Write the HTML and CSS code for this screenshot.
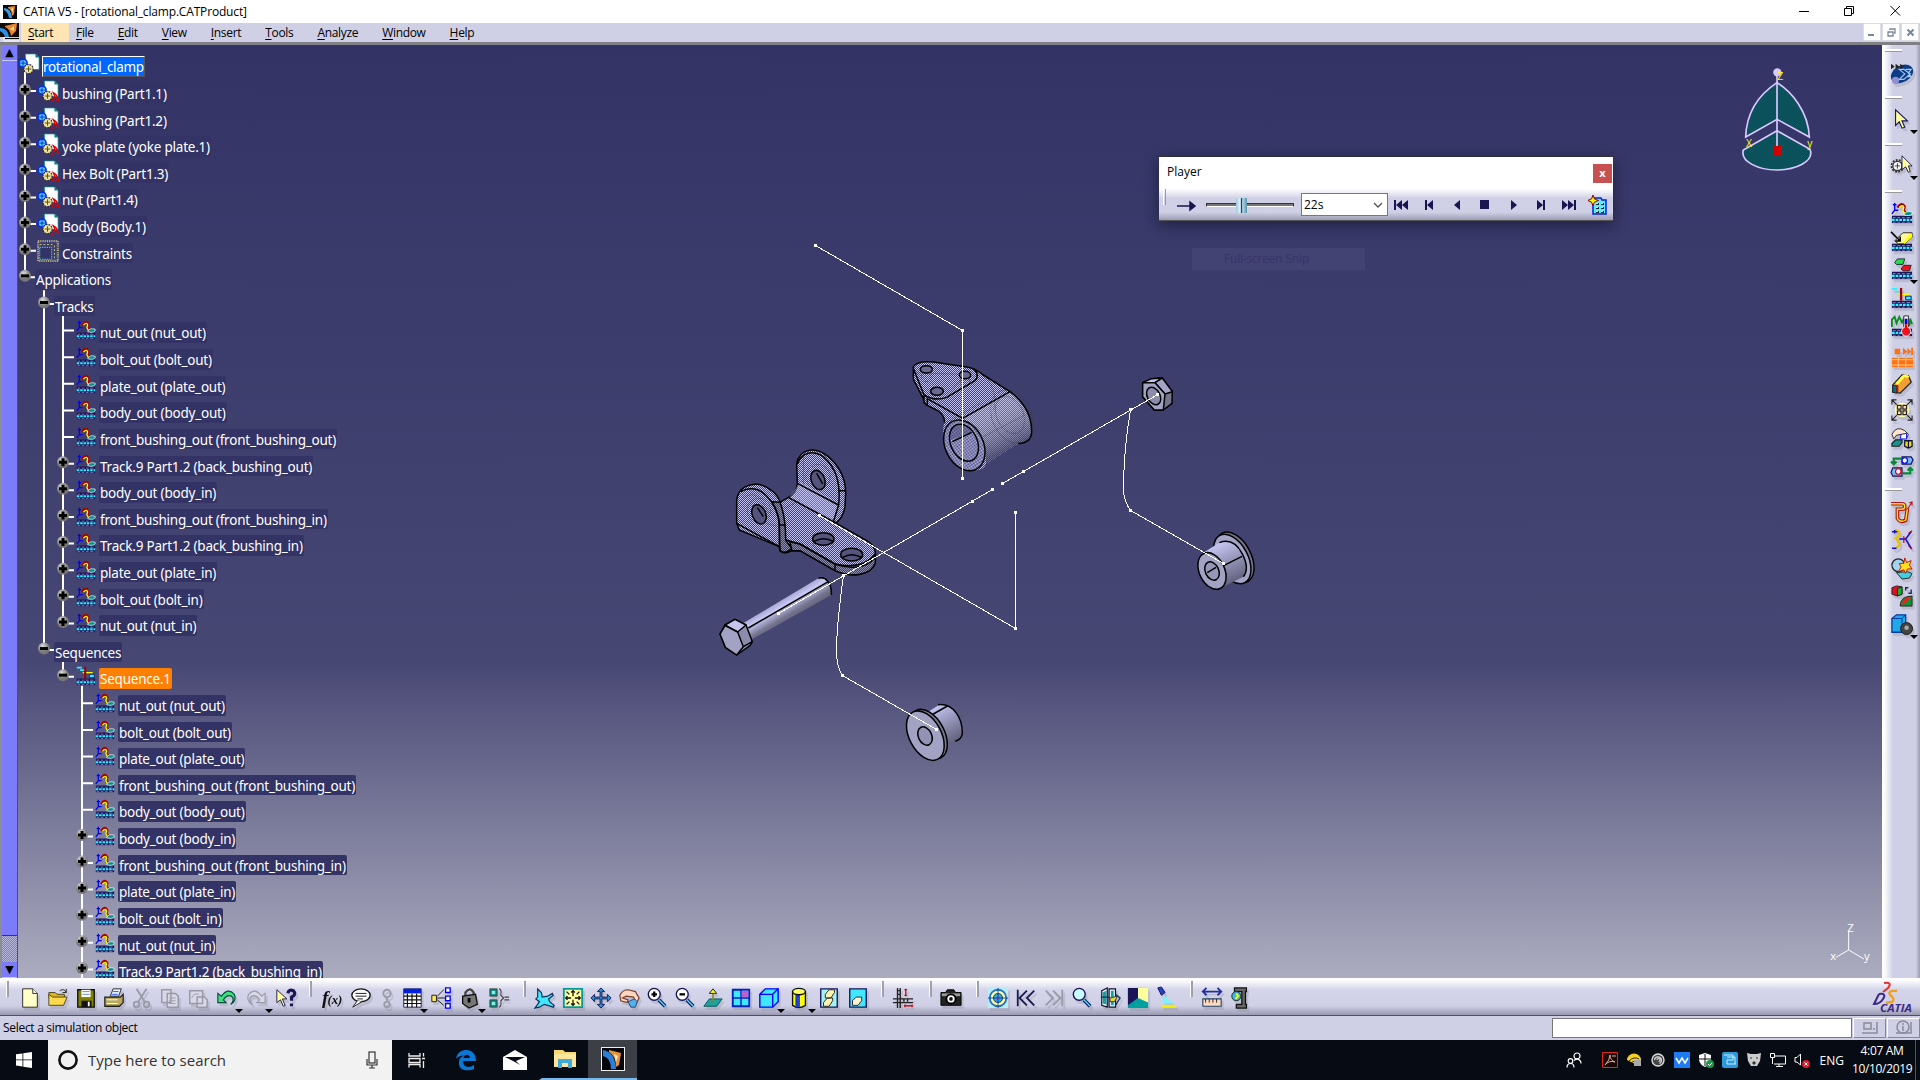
FILE: index.html
```html
<!DOCTYPE html>
<html lang="en">
<head>
<meta charset="utf-8">
<title>CATIA V5 - [rotational_clamp.CATProduct]</title>
<link rel="stylesheet" href="styles.css">
</head>
<body>
<div class="screen">
  <header class="titlebar">
    <svg class="app-icon" viewBox="0 0 14 14"><rect width="14" height="14" fill="#06070f"/><path d="M1 3Q8 3 9 13L6 13Q5 7 1 5Z" fill="#3a9be0"/><path d="M5 2L12 1L11 9L9 11Q9 5 5 3Z" fill="#f08a24"/><path d="M8 4l2-1-.5 4z" fill="#ffe9b0"/></svg>
    <span class="title-text">CATIA V5 - [rotational_clamp.CATProduct]</span>
    <svg class="win-controls" viewBox="0 0 134 20" fill="none" stroke="#000"><path d="M15 10.5h10M60.500 7.500h7v7h-7zM62.500 7V5.500h7v7h-2M106.500 5l9.500 9.500M116 5l-9.500 9.500"/></svg>
  </header>
  <nav class="menubar">
    <svg class="doc-icon" viewBox="0 0 19 19"><rect width="19" height="14" fill="#120a08"/><path d="M0 5Q8 5 9 14H5Q4 10 0 8Z" fill="#2f8fe0"/><path d="M5 3L17 0L16 8L11 13Q10 6 5 4Z" fill="#e8842a"/><path d="M10 6l4-3v5z" fill="#ffe0a0"/><path d="M5 15.500h14" stroke="#000"/><path d="M4 14v4h15" stroke="#fff" fill="none"/></svg>
    <span class="menu start"><u>S</u>tart</span><span class="menu"><u>F</u>ile</span><span class="menu"><u>E</u>dit</span><span class="menu"><u>V</u>iew</span><span class="menu"><u>I</u>nsert</span><span class="menu"><u>T</u>ools</span><span class="menu"><u>A</u>nalyze</span><span class="menu"><u>W</u>indow</span><span class="menu"><u>H</u>elp</span>
    <svg class="mdi" viewBox="0 0 57 19"><path d="M.5.500h17v17H.5zM19.500.500h17v17h-17zM38.500.500h17v17h-17z" fill="#fff" stroke="#dcdce4"/><g stroke="#75869a" stroke-width="2" fill="none"><path d="M5 12h6M44.500 6.500l6 6M50.500 6.500l-6 6"/><path d="M25 9h5v4h-5zM27 7V6h5v4h-1" stroke-width="1.300"/></g></svg>
  </nav>
  <main class="workspace">
    <aside class="scroll"><span class="scroll-btn">▲</span><span class="scroll-thumb"></span><span class="scroll-track"></span><span class="scroll-btn">▼</span></aside>
    <section class="viewport">
      <svg class="scene" viewBox="18 45 1864 933">
        <defs>
          <pattern id="dither" width="6" height="6" patternUnits="userSpaceOnUse"><rect width="6" height="6" fill="#404070"/><path d="M0 0h3v3H0zM3 3h3v3H3z" fill="#c4c4f4"/></pattern>
          <pattern id="ditherDark" width="6" height="6" patternUnits="userSpaceOnUse"><rect width="6" height="6" fill="#404070"/><path d="M0 0h3v3H0zM3 3h3v3H3z" fill="#8c8cae"/></pattern>
          <pattern id="ditherTeal" width="6" height="6" patternUnits="userSpaceOnUse"><rect width="6" height="6" fill="#2a3a62"/><path d="M0 0h3v3H0zM3 3h3v3H3z" fill="#0f5560"/></pattern>
          <linearGradient id="shaft" gradientUnits="userSpaceOnUse" x1="240" y1="780" x2="275" y2="838"><stop offset="0" stop-color="#a4a4d0"/><stop offset=".3" stop-color="#c8c8f6"/><stop offset=".75" stop-color="#74748e"/><stop offset="1" stop-color="#64647a"/></linearGradient>
          <linearGradient id="barrel" gradientUnits="userSpaceOnUse" x1="860" y1="150" x2="940" y2="320"><stop offset="0" stop-color="#fff" stop-opacity=".08"/><stop offset="1" stop-color="#444466" stop-opacity=".75"/></linearGradient>
          <linearGradient id="bushA" gradientUnits="userSpaceOnUse" x1="1080" y1="190" x2="1130" y2="300"><stop offset="0" stop-color="#c4c4f2"/><stop offset="1" stop-color="#646480"/></linearGradient>
          <linearGradient id="bushB" gradientUnits="userSpaceOnUse" x1="225" y1="680" x2="285" y2="780"><stop offset="0" stop-color="#c4c4f2"/><stop offset="1" stop-color="#646480"/></linearGradient>
        </defs>
        <g class="part" transform="translate(700 340) scale(.33333)">
          <path d="M640 80C652 62 680 64 700 66L805 82C825 86 838 96 850 105L930 155C975 188 995 230 995 275C995 300 975 312 955 310L858 372C852 387 840 392 820 390C778 385 742 345 733 305Q726 270 733 248Q735 228 715 213L676 193L668 170L640 118Z" fill="url(#dither)" stroke="none"/>
          <path d="M790 235L930 155C975 188 995 230 995 275C995 300 975 312 955 310L858 372C860 320 840 260 790 235Z" fill="url(#barrel)" stroke="none"/>
          <g class="ghost"><ellipse cx="935" cy="230" rx="58" ry="84" transform="rotate(-25 935 230)"/><ellipse cx="930" cy="225" rx="40" ry="58" transform="rotate(-25 930 225)"/><path d="M735 250L840 190M850 290L975 225M860 115Q895 160 880 210M650 98L800 104L740 160"/><circle cx="679" cy="110" r="15"/><circle cx="795" cy="125" r="15"/></g>
          <path d="M640 118V80C652 62 680 64 700 66L805 82C825 86 838 96 850 105L930 155C975 188 995 230 995 275C995 300 975 312 955 310M640 85L672 165Q705 185 740 172L825 122Q840 108 822 86M640 118L668 172L676 193L715 213Q735 228 733 248M680 175L788 235L930 155M672 165v25M682 176v22"/>
          <ellipse cx="793" cy="316" rx="57" ry="80" transform="rotate(-26 793 316)" fill="url(#dither)"/>
          <ellipse cx="792" cy="308" rx="40" ry="58" transform="rotate(-24 792 308)" fill="url(#dither)"/>
          <path d="M752 300Q750 258 778 254Q800 256 815 277Z" fill="#404070" opacity=".45" stroke="none"/>
          <path d="M757 305L815 277"/>
          <g fill="#686894"><ellipse cx="679" cy="88" rx="18" ry="11"/><ellipse cx="795" cy="105" rx="17" ry="11"/><ellipse cx="711" cy="154" rx="19" ry="12"/></g>
          <path d="M292 430L290 372C298 325 345 318 385 350C422 382 437 420 437 460L435 500Q430 530 410 548L400 545L505 605Q526 620 526 640V668C515 706 455 714 405 692L300 632H275Q255 645 240 632L238 620L118 570L110 550V480C115 440 150 430 175 433C210 440 235 465 240 487L265 472Q290 460 292 430Z" fill="url(#dither)"/>
          <path d="M405 672L405 692C455 714 515 706 526 668V642C520 680 460 692 405 672ZM270 605L300 612L405 672V692L300 632H275ZM240 487Q257 530 257 600L275 625Q255 645 240 632L238 560Q238 520 215 485Z" fill="url(#ditherDark)"/>
          <path d="M302 425L415 490L400 540L268 470Z" fill="#c8c8f6" opacity=".35" stroke="none"/>
          <g class="ghost"><path d="M130 475Q175 440 205 520M125 500L165 540L235 560M310 350V440L420 500M255 505L300 480M380 545L490 620"/><circle cx="177" cy="510" r="35"/><circle cx="354" cy="410" r="36"/><ellipse cx="370" cy="612" rx="30" ry="20"/></g>
          <path d="M110 550L238 620V560C238 520 215 470 175 450Q145 440 122 455M292 372C305 335 340 330 370 350C410 385 422 430 416 495M292 430L416 495L400 545M418 452h18M240 555h17M265 472L400 545M257 600L300 612L405 672Q490 690 526 642M238 620L242 634"/>
          <g fill="#54547e"><ellipse cx="177" cy="523" rx="20" ry="30" transform="rotate(-22 177 523)"/><ellipse cx="354" cy="420" rx="20" ry="30" transform="rotate(-22 354 420)"/><ellipse cx="370" cy="597" rx="32" ry="19"/><ellipse cx="455" cy="644" rx="33" ry="19"/></g>
          <path d="M172 503L190 530M350 400L368 432M342 604Q370 588 400 604M428 652Q455 636 484 652"/>
          <path d="M125 852L355 715C378 708 396 730 394 765L152 900Z" fill="url(#shaft)" stroke="none"/>
          <path d="M145 864L385 725M355 715C378 708 396 730 394 765"/>
          <path d="M60 882L75 855L105 838L138 855L157 905L150 917L110 945L76 922Z" fill="#8c8cae"/><path d="M75 855L105 838L138 855L113 876Z" fill="#c4c4ee"/><path d="M60 882L75 857L113 876L130 920L110 945L76 922Z" fill="#a2a2c4"/><path d="M130 920L157 905"/>
        </g>
        <g class="part" transform="translate(860 480) scale(.33333)">
          <ellipse cx="1125" cy="232" rx="48" ry="82" transform="rotate(-28 1125 232)" fill="#74748c"/><ellipse cx="1117" cy="237" rx="47" ry="80" transform="rotate(-28 1117 237)" fill="#a4a4c8"/>
          <path d="M1028 220L1080 187Q1120 172 1145 220Q1170 265 1150 290L1090 320Z" fill="url(#bushA)" stroke="none"/><path d="M1078 188Q1120 172 1146 220Q1170 265 1150 290M1085 260L1146 229"/>
          <ellipse cx="1056" cy="273" rx="38" ry="58" transform="rotate(-25 1056 273)" fill="#a2a2c4"/><ellipse cx="1056" cy="273" rx="20" ry="29" transform="rotate(-25 1056 273)" fill="#9696b8"/><path d="M1042 278L1068 262"/>
          <path d="M200 698L240 673C280 672 308 715 307 760Q306 777 288 784L255 800Z" fill="url(#bushB)" stroke="none"/><path d="M234 674C280 668 308 715 307 760Q306 777 286 784M215 705L262 678"/>
          <ellipse cx="206" cy="762" rx="47" ry="80" transform="rotate(-28 206 762)" fill="#77778f"/><ellipse cx="196" cy="767" rx="48" ry="80" transform="rotate(-28 196 767)" fill="#a2a2c4"/><ellipse cx="195" cy="768" rx="20" ry="29" transform="rotate(-25 195 768)" fill="#9292b4"/>
        </g>
        <g class="part" transform="translate(1100 360) scale(.33333)"><path d="M128 68L155 56L187 54L217 95L216 130L190 150H163L128 110Z" fill="#74748c"/><path d="M128 68L155 56L187 54L165 68Z" fill="#c4c4ee"/><path d="M165 68L187 54L217 95L195 102Z" fill="#a4a4c8"/><path d="M128 68L165 68L195 102L190 150H163L128 110Z" fill="#a2a2c4"/><ellipse cx="161" cy="108" rx="19" ry="28" transform="rotate(-28 161 108)" fill="#8c8cac"/></g>
        <g class="track">
          <path d="M815.500 245.500L962.500 330.500V478.500M778.500 613.500L992.500 489.500M1002.500 483.500L1157 395M819.500 515.500L1015.500 628.500V512.500M843.500 575.500Q836.500 625 836.500 652Q837 668 842.500 675.500L936.500 729.500M1130.500 410Q1123.500 450 1123.500 492Q1125 503 1130.500 510.500L1223.500 563.500"/>
          <path class="dots" d="M814 244h3v3h-3zM961 329h3v3h-3zM961 477h3v3h-3zM777 612h3v3h-3zM991 488h3v3h-3zM971 500h3v3h-3zM1001 482h3v3h-3zM1022 470h3v3h-3zM1156 393h3v3h-3zM818 514h3v3h-3zM1014 627h3v3h-3zM1014 511h3v3h-3zM842 574h3v3h-3zM841 674h3v3h-3zM935 728h3v3h-3zM1129 408h3v3h-3zM1129 509h3v3h-3zM1222 562h3v3h-3z"/>
        </g>
        <g class="compass" transform="translate(1720 0) scale(.33333)">
          <path d="M171 248C130 275 80 325 77 411L171 358L268 411C265 335 215 275 171 248ZM171 392L270 448C285 485 225 510 171 510C115 510 60 485 70 450Z" fill="url(#ditherTeal)"/><path d="M171 220V440"/><circle cx="172" cy="217" r="10" fill="#dcc8ff"/><path d="M160 438h26v27h-26z" fill="#d00000" stroke="none"/><text x="172" y="240">Z</text><text x="78" y="442">X</text><text x="262" y="442">y</text>
        </g>
        <g class="triad" transform="translate(1500 900) scale(.33333)"><path d="M1046 95V150L1008 172M1046 150L1092 177"/><text x="1042" y="96">Z</text><text x="991" y="180">x</text><text x="1092" y="181">y</text></g>
      </svg>
      <div class="tree" id="tree"></div>
      <div class="snip">Full-screen Snip</div>
      <div class="player">
        <div class="player-title"><span>Player</span><b>x</b></div>
        <div class="player-bar">
          <i class="grip"></i>
          <svg class="parrow" viewBox="0 0 20 12"><path d="M0 6h17M13 2l5 4-5 4z" stroke="#1c1450" stroke-width="1.500" fill="#1c1450"/></svg>
          <div class="slider"><i></i></div>
          <div class="combo"><span>22s</span><svg viewBox="0 0 10 6" width="10" height="6"><path d="M1 1l4 4 4-4" fill="none" stroke="#555" stroke-width="1.300"/></svg></div>
          <div class="pbuttons" id="pbuttons"></div>
        </div>
      </div>
    </section>
    <aside class="rightbar" id="rightbar"></aside>
  </main>
  <div class="bottombar"><div class="tools" id="tools"></div>
    <svg class="ds" viewBox="0 0 42 32" fill="none"><path d="M13 2Q22 1 17 7L12 11" stroke="#e03030" stroke-width="2"/><path d="M8 13Q16 12 12 18Q9 23 3 23L8 13" stroke="#3c2a88" stroke-width="2"/><path d="M26 10Q16 9 19 14Q25 18 21 21L15 22" stroke="#f0a020" stroke-width="2.300"/><text x="9" y="30.500" textLength="32" lengthAdjust="spacingAndGlyphs">CATIA</text></svg>
  </div>
  <div class="statusbar"><span>Select a simulation object</span><div class="power"></div>
    <div class="sbtn"><svg viewBox="0 0 20 16"><path d="M4 3h7v6H4zM13 9h2M17 2v11H2" /></svg></div><div class="sbtn"><svg viewBox="0 0 20 16"><circle cx="9" cy="7" r="6"/><path d="M9 6v5M8 4h2M17 2v11H2"/></svg></div>
  </div>
  <footer class="taskbar">
    <div class="winstart"><svg viewBox="0 0 16 16" width="16" height="16"><path d="M0 2.300l6.500-.9v6.100H0zM7.300 1.300L16 0v7.500H7.300zM0 8.300h6.500v6.200L0 13.600zM7.300 8.300H16V16l-8.700-1.300z" fill="#fff"/></svg></div>
    <div class="search"><svg width="20" height="20" viewBox="0 0 20 20"><circle cx="10" cy="10" r="8.600" fill="none" stroke="#111" stroke-width="2.600"/></svg><span>Type here to search</span><svg class="mic" width="14" height="18" viewBox="0 0 14 18" fill="none" stroke="#333" stroke-width="1.200"><rect x="4" y="1" width="6" height="11"/><path d="M2 8v6h10V8M7 14v3M4 17h6"/></svg></div>
    <div class="task"><svg width="18" height="16" viewBox="0 0 18 16" fill="none" stroke="#eee" stroke-width="1.300"><path d="M1 1v3h11V1M1 6.500h11v4H1zM1 15.500v-3h11v3M15.500 1v3.500M15.500 9v7M14 6.500h3"/></svg></div>
    <div class="task"><svg width="22" height="22" viewBox="0 0 22 22"><path d="M1 10C2 3 7 1 11.500 1 17 1 21 5 21 12H8C8 19 15 19 19 16V20C12 23 3 21 4 13 4.500 9 7 7 10 6.500 5 6.500 2.500 8 1 10ZM8.500 9H15C15 4.500 9 4.500 8.500 9Z" fill="#0a78d7"/></svg></div>
    <div class="task"><svg width="24" height="20" viewBox="0 0 24 20"><path d="M0 7L12 0l12 7v13H0z" fill="#fff"/><path d="M2 7h20l-9 4 4 4-5-3z" fill="#070c14"/></svg></div>
    <div class="task run"><svg width="22" height="20" viewBox="0 0 22 20"><path d="M0 1h9l2 2h11v15H0z" fill="#f8d775"/><path d="M0 5h22v13H0z" fill="#fde69b"/><path d="M4 19v-9h14v9h-4v-5H8v5z" fill="#3fa9e0"/></svg></div>
    <div class="task active"><svg width="24" height="24" viewBox="0 0 24 24"><rect x=".5" y=".5" width="23" height="23" fill="#05060c" stroke="#eee"/><path d="M2 3Q14 5 15 22L10 22Q10 11 2 9Z" fill="#2a80d8"/><path d="M8 3l12 3-2 12-3 2Q15 9 8 5z" fill="#e8903c"/><path d="M13 7l4 2-2 6z" fill="#ffe6b0"/></svg></div>
    <div class="tray">
      <svg viewBox="0 0 16 16" fill="none" stroke="#fff" stroke-width="1.200"><circle cx="11" cy="4" r="3"/><circle cx="4.500" cy="9" r="2.300"/><path d="M1 15.500q0-4 3.500-4t3.500 4M8 8.500q3-3 6 0 1 1 1 3"/></svg>
      <svg class="first" viewBox="0 0 16 16"><path d="M.5.500h15v15H.5z" fill="#1c0808" stroke="#e02818"/><path d="M3 13Q8 8 8 3Q8 8 13 10Q7 8 3 13M10 4h4" fill="none" stroke="#d8b0a0"/></svg>
      <svg viewBox="0 0 16 16"><path d="M1 8a7 6.500 0 0 1 14 0L9 12z" fill="#f4d020"/><path d="M3 9q5-5 10-2M5 11q3-3 7-2" stroke="#332a00" fill="none"/><path d="M8 8h7v6H8z" fill="#aaa"/></svg>
      <svg viewBox="0 0 16 16" fill="none" stroke="#ddd" stroke-width="1.400"><circle cx="8" cy="8" r="6" fill="#444"/><path d="M4.500 8a3.500 3.500 0 1 1 5 3.500M7 8a1.500 1.500 0 1 1 1.500 1.500" stroke-width="1.200"/></svg>
      <svg viewBox="0 0 16 16"><path d="M0 0h16v16H0z" fill="#1e7cf0"/><path d="M2 6l3 5 3-5 3 5 3-5" fill="none" stroke="#fff" stroke-width="1.500"/></svg>
      <svg viewBox="0 0 16 16"><path d="M7 1l6 2v5q-1 5-6 7-5-2-6-7V3z" fill="#fff"/><path d="M7 2v12M1 7h12" stroke="#111"/><circle cx="12" cy="12" r="4" fill="#1a9a4a"/><path d="M10 12l1.500 1.500L14 11" stroke="#fff" fill="none"/></svg>
      <svg viewBox="0 0 16 16"><rect width="16" height="16" rx="2" fill="#2d9ade"/><path d="M2 3h9v5H5v4h9M5 5h8v7" fill="none" stroke="#c8ecff"/></svg>
      <svg viewBox="0 0 16 16"><path d="M1 1l4 1h6l4-1-1 8-3 5H5L2 9z" fill="#ccc"/><path d="M4 6h2M10 6h2M7 10h2v2H7z" stroke="#333" fill="#333"/></svg>
      <svg viewBox="0 0 16 16" fill="none" stroke="#fff"><path d="M4 4h11.500v8H4M.5 1.500h4v4h-4zM9 12v3M6 14.500h7M2.500 6v6"/></svg>
      <svg viewBox="0 0 16 16"><path d="M1 5.500h2L6.500 2v11L3 10H1z" fill="none" stroke="#fff"/><circle cx="12" cy="12" r="4" fill="#d8202c"/><path d="M10.500 10.500l3 3m0-3l-3 3" stroke="#fff"/></svg>
      <span class="lang">ENG</span><span class="clock">4:07 AM<br>10/10/2019</span><i class="peek"></i>
    </div>
  </footer>
</div>
<script src="script.js"></script>
</body>
</html>
```
FILE: styles.css
```css
* { box-sizing: border-box; }
body { margin: 0; font-family: "Open Sans", "Noto Sans", sans-serif; font-size: 12px; color: #000; overflow: hidden; }
.screen { width: 1920px; height: 1080px; display: flex; flex-direction: column; background: #cfcfe6; }
svg { display: block; flex: none; }
.titlebar { height: 23px; background: #fff; display: flex; align-items: center; padding-left: 3px; }
.app-icon { width: 14px; height: 14px; }
.title-text { margin-left: 6px; letter-spacing: -.17px; padding-bottom: 1px; }
.win-controls { width: 134px; height: 20px; margin-left: auto; margin-right: 2px; margin-top: -1px; }
.menubar { height: 19px; display: flex; align-items: center; background: #cfcfe6; }
.doc-icon { width: 19px; height: 19px; margin-right: 2px; }
.menu { padding: 0 12px; line-height: 19px; letter-spacing: -.32px; }
.menu u { text-underline-offset: 2px; }
.menu.start { width: 48px; background: #ffe4b4; padding: 0 0 0 7px; margin-right: -5px; }
.mdi { width: 57px; height: 19px; margin-left: auto; }
.workspace { height: 936px; display: flex; border-top: 3px solid #7f7f86; }
.scroll { width: 18px; border-left: 2px solid #8c8c94; background: #7b7bfc; display: flex; flex-direction: column; border-right: 1px solid #4a4a90; }
.scroll-btn { height: 16px; font: 11px/16px "DejaVu Sans", sans-serif; text-align: center; border-bottom: 1px solid #c8c8ff; }
.scroll-thumb { flex: 1; border-bottom: 1px solid #333380; }
.scroll-track { height: 26px; background: repeating-conic-gradient(#7b7bfc 0 25%, #b4b4d8 0 50%) 0 0 / 2px 2px; }
.viewport { width: 1864px; position: relative; overflow: hidden; background: linear-gradient(#333366, #474774 66%, #acacc0); }
.scene { position: absolute; left: 0; top: 0; width: 1864px; height: 933px; }
.part { fill: none; stroke: #000; stroke-width: 4.500; stroke-linejoin: round; }
.ghost { stroke: #33334c; stroke-width: 2; stroke-dasharray: 3 3; fill: none; }
.track { fill: none; stroke: #fff; stroke-width: 1; shape-rendering: crispEdges; }
.track .dots { fill: #fff; stroke: none; }
.compass { stroke: #dcc8ff; stroke-width: 5; }
.compass text { fill: #ffff00; stroke: none; font-size: 31px; }
.triad { fill: none; stroke: #fff; stroke-width: 3; }
.triad text { fill: #fff; stroke: none; font-size: 34px; }
.tree { position: relative; padding-top: 8.400px; }
.tree-lines { position: absolute; left: 0; top: 0; }
.row { height: 26.620px; display: flex; align-items: flex-start; position: relative; }
.row svg { width: 22px; height: 22px; }
.row .sim { width: 20px; height: 20px; margin: 1px 1px 0 0; }
.label { margin-top: 3px; height: 20.500px; line-height: 22.500px; padding: 0 1px; margin-left: 2px; border-radius: 2px; background: #333366; color: #fff; font-size: 13.500px; letter-spacing: -.22px; white-space: nowrap; font-family: "Noto Sans", sans-serif; }
.label.root { background: #0068ff; border: 1px solid #fff; border-right-color: #555; border-bottom-color: #555; border-radius: 0; line-height: 21px; padding: 0; letter-spacing: -.35px; }
.label.on { background: #ff8000; }
.snip { position: absolute; left: 1174px; top: 203px; width: 173px; height: 22px; line-height: 22px; padding-left: 32px; background: #424273; color: #35356a; letter-spacing: -.2px; }
.player { position: absolute; left: 1141px; top: 111px; width: 454px; height: 65px; display: flex; flex-direction: column; background: #fff; border-top: 1px solid #333; border-bottom: 1px solid #555; box-shadow: 0 4px 14px rgba(0,0,20,.45); }
.player-title { height: 32px; display: flex; justify-content: space-between; padding: 7px 1px 0 8px; line-height: 16px; }
.player-title b { width: 19px; height: 19px; background: #c75050; color: #fff; text-align: center; font-size: 11px; line-height: 17px; }
.player-bar { flex: 1; display: flex; align-items: center; background: linear-gradient(#fff, #d0d0e6 30%, #cfcfe6 75%, #9c9cb4); }
.grip { width: 3px; height: 16px; margin: -16px 12px 0 4px; border-left: 1px solid #fff; border-right: 1px solid #999; }
.parrow { width: 20px; height: 12px; margin: 3px 9px 0 -1px; }
.slider { width: 88px; height: 4px; border: 1px solid #333; border-bottom-color: #fff; background: #777; position: relative; }
.slider i { position: absolute; left: 29px; top: -6px; width: 11px; height: 15px; background: linear-gradient(90deg, #9cc8dc, #e8f6ff 40%, #246 45% 55%, #b8dcec 60%, #5890ac); }
.combo { width: 87px; height: 23px; margin-left: 7px; background: #fff; border: 1px solid #777; display: flex; align-items: center; justify-content: space-between; padding: 0 4px 0 2px; }
.pbuttons { display: flex; }
.pbuttons svg { width: 20px; height: 20px; margin-right: 8px; }
.pbuttons svg:first-child { margin-left: 3px; }
.pbuttons svg:last-child { margin-left: 1px; margin-right: 0; }
.rightbar { flex: 1; display: flex; flex-direction: column; align-items: center; border-left: 2px solid #fff; background: linear-gradient(90deg, #fff, #cfcfe6 25%, #cfcfe6 88%, #9c9cb4); }
.rightbar .tool { width: 34px; }
.hsep { width: 17px; height: 3px; margin-right: 17px; border-top: 2px solid #fff; border-bottom: 1px solid #999; }
.bottombar { height: 38px; display: flex; align-items: center; border-bottom: 1px solid #505060; background: linear-gradient(#fff 5%, #d4d4ea 32%, #cfcfe6 75%, #9a9ab2); }
.tools { display: flex; align-items: center; height: 37px; padding-top: 2px; }
.tool { display: flex; align-items: center; justify-content: center; position: relative; width: 28px; height: 28px; flex: none; }
.tool svg { width: 22px; height: 22px; overflow: visible; filter: drop-shadow(2px 3px 0 rgba(120,120,130,.22)); }
.tool.drop::after { content: ""; position: absolute; right: -2px; bottom: -1px; border: 4px solid transparent; border-top-color: #000; border-bottom: 0; }
.rightbar .tool.drop::after { right: 1px; bottom: -1px; }
.vsep { width: 3px; height: 16px; border-left: 1px solid #fff; border-right: 2px solid #a0a0ac; margin-top: -18px; }
.ds { width: 42px; height: 32px; margin: 0 7px 0 auto; }
.ds text { font: italic bold 10px "Open Sans", sans-serif; fill: #3c2a88; }
.statusbar { height: 24px; display: flex; align-items: center; padding-left: 3px; padding-bottom: 1px; letter-spacing: -.3px; }
.power { width: 300px; height: 20px; background: #fff; border: 1px solid #777; margin-left: auto; }
.sbtn { width: 33px; height: 20px; margin-left: 1px; border: 1px solid; border-color: #fff #888 #888 #fff; display: flex; align-items: center; justify-content: center; }
.sbtn svg { width: 20px; height: 16px; fill: none; stroke: #8a8a98; stroke-width: 1.500; }
.taskbar { height: 40px; background: #070c14; display: flex; color: #fff; }
.winstart { width: 48px; display: flex; align-items: center; justify-content: center; }
.search { width: 344px; background: #f2f2f2; color: #333; display: flex; align-items: center; padding: 0 13px 0 10px; font-size: 15px; gap: 10px; }
.mic { margin-left: auto; }
.task { width: 49px; display: flex; align-items: center; justify-content: center; }
.task.run { border-bottom: 2px solid #76b9ed; border-left: 3px solid transparent; }
.task.active { background: #3c4046; border-bottom: 2px solid #76b9ed; }
.tray { margin-left: auto; display: flex; align-items: center; gap: 8px; }
.tray svg { width: 16px; height: 16px; }
.tray .first { margin-left: 12px; }
.lang { margin-left: 2px; }
.clock { width: 60px; text-align: center; line-height: 18px; letter-spacing: -.35px; margin-right: 2px; }
.peek { width: 5px; height: 40px; border-left: 1px solid #555; margin-left: -7px; }
```
FILE: script.js
```js
const svg = (body, cls = "", box = 24) => `<svg class="${cls}" viewBox="0 0 ${box} ${box}" fill="none">${body}</svg>`;
const film = '<path d="M1 15h22v8H1z" fill="#1a1458"/><path d="M2 17h3M7 17h3M12 17h3M17 17h4M2 22h3M7 22h3M12 22h3M17 22h4" stroke="#88c"/><path d="M1 19.500h22" stroke="#2ef0ff" stroke-width="2.500" stroke-dasharray="3 1"/>';
const track = film + '<path d="M4 1v8l-3 4M4 9h4M2 3h4" stroke="#0000f0" stroke-width="1.500"/><path d="M7 6q5-7 8-1l-1 4 3 4" stroke="#a00" stroke-width="2.500"/><path d="M9 6q4-4 5 0l-1 3 2 4" stroke="#ff0" stroke-width="1.500"/><path d="M14 14q2-5 9-3v2q-3 3-9 1z" fill="#089090" stroke="#fff" stroke-width=".8"/>';
const sequence = film + '<path d="M1 2h6M5 5h6" stroke="#2ef0ff" stroke-width="2"/><path d="M8 8h12" stroke="#ff0" stroke-width="1.500"/><path d="M11 1v14" stroke="#a00000" stroke-width="2.500"/><path d="M16 10h6v4h-6z" fill="#2ef0ff" stroke="#1a1458"/>';
const gears = '<circle cx="5.500" cy="11" r="5.300" fill="#0030e8"/><circle cx="5.500" cy="11" r="3.500" fill="#58c8ff"/><path d="M5.500 8v6M2.500 11h6" stroke="#0030c0"/><circle cx="11.500" cy="17.500" r="5" fill="#f0e498" stroke="#2a2850" stroke-width="1.300" stroke-dasharray="2 1"/><path d="M11.500 14.500v6M8.500 17.500h6" stroke="#504820"/>';
const product = '<path d="M8 1h11l4 4v13H9z" fill="#fff" stroke="#009090" stroke-width=".8"/><path d="M19 1l4 4h-4z" fill="#008080"/>' + gears;
const part = product + '<path d="M17 21q4-2 1-7 4 2 5 7M15 23h3M21 22h3" stroke="#e00000" stroke-width="1.700"/>';
const constraints = '<path d="M1 1h22v22H1z" stroke="#b8b890" stroke-dasharray="1 1" stroke-width="3"/><path d="M3 8h13v13H3z" fill="#333366" stroke="#2ef0ff" stroke-dasharray="1.500 1"/><path d="M3 5h14M19 6v15" stroke="#e0d890" stroke-dasharray="2 2"/>';

const rows = [
  [0, "rotational_clamp", product, "r"],
  ...["bushing (Part1.1)", "bushing (Part1.2)", "yoke plate (yoke plate.1)", "Hex Bolt (Part1.3)", "nut (Part1.4)", "Body (Body.1)"].map(t => [1, t, part, "+"]),
  [1, "Constraints", constraints, "+"], [1, "Applications", "", "-"], [2, "Tracks", "", "-"],
  ...["nut_out (nut_out)", "bolt_out (bolt_out)", "plate_out (plate_out)", "body_out (body_out)", "front_bushing_out (front_bushing_out)"].map(t => [3, t, track, ""]),
  ...["Track.9 Part1.2 (back_bushing_out)", "body_out (body_in)", "front_bushing_out (front_bushing_in)", "Track.9 Part1.2 (back_bushing_in)", "plate_out (plate_in)", "bolt_out (bolt_in)", "nut_out (nut_in)"].map(t => [3, t, track, "+"]),
  [2, "Sequences", "", "-"], [3, "Sequence.1", sequence, "-"],
  ...["nut_out (nut_out)", "bolt_out (bolt_out)", "plate_out (plate_out)", "front_bushing_out (front_bushing_out)", "body_out (body_out)"].map(t => [4, t, track, ""]),
  ...["body_out (body_in)", "front_bushing_out (front_bushing_in)", "plate_out (plate_in)", "bolt_out (bolt_in)", "nut_out (nut_in)", "Track.9 Part1.2 (back_bushing_in)"].map(t => [4, t, track, "+"])
];
const pitch = 26.62, top0 = 8.4;
const lineX = [0, 7, 26, 45, 64];
const at = i => top0 + i * pitch;
let lines = "", balls = "", html = "";
lines += `M7 ${at(0) + 18}V${at(8) + 9}M26 ${at(8) + 24}V${at(22) + 9}M45 ${at(9) + 23}V${at(21) + 9}M45 ${at(22) + 20}V${at(23) + 9}M64 ${at(23) + 20}V940`;
rows.forEach(([level, text, icon, mark], i) => {
  const sim = level > 2, y = at(i);
  const pad = level === 0 ? 0 : icon ? (sim ? lineX[level] + 13 : 19) : lineX[level] + 8;
  html += `<div class="row" style="padding-left:${pad}px">${icon ? svg(icon, sim ? "sim" : "") : ""}<span class="label${mark === "r" ? " root" : ""}${text === "Sequence.1" ? " on" : ""}">${text}</span></div>`;
  if (level) lines += `M${lineX[level]} ${y + 11}h11`;
  if (mark === "+" || mark === "-") {
    const x = lineX[level], cy = y + 9.5;
    balls += `<circle cx="${x}" cy="${cy}" r="6" fill="url(#ball)"/><path d="M${x - 4} ${cy}h8${mark === "+" ? `M${x} ${cy - 4}v8` : ""}" stroke="#000" stroke-width="3"/>`;
  }
});
document.getElementById("tree").innerHTML = `<svg class="tree-lines" width="300" height="940" fill="none"><defs><radialGradient id="ball" cx=".4" cy=".3"><stop offset="0" stop-color="#ddd"/><stop offset="1" stop-color="#777"/></radialGradient></defs><path d="${lines}" stroke="#fff" stroke-width="2"/>${balls}</svg>` + html;

const N = "#1a1458", C = "#40e8ff";
const p = (d, f = "none", s = "none", w = 1) => `<path d="${d}" fill="${f}" stroke="${s}" stroke-width="${w}"/>`;
const glass = (m, f = "#fff") => p("M14 14l7 7", "none", N, 4) + p("M14 14l7 7", "none", C, 1.5) + `<circle cx="9" cy="8" r="6.500" fill="${f}" stroke="${N}" stroke-width="1.500"/>` + p(m, "none", "#000", 2.5);
const cursor = p("M5 2v17l4-4 3 7 3-1-3-7h6z", "#ffffa0", N, 1.2);
const I = {
  neu: p("M4 2h11l5 5v15H4z", "#ffffc8", "#222") + p("M15 2v5h5", "#fff", "#222"),
  open: p("M2 6h7l2 2h8v4H2z", "#e0b020", "#442") + p("M2 20V8l4 3h16l-4 9z", "#ffd850", "#442") + p("M14 4q5-3 7 2M21 2v4h-4", "none", "#222"),
  save: p("M3 3h18v19H3z", "#808000", "#111", 1.5) + p("M7 3h10v8H7z", "#fff") + p("M8 5h8M8 8h8", "none", "#68c", 1) + p("M7 15h11v7H7z", "#111") + p("M14 16h2v5h-2z", "#fff"),
  print: p("M8 10L11 2h9l-3 8z", "#e8f8ff", "#222") + p("M11 5h6M10 8h6", "none", "#24f") + p("M2 11h17l3-3v9l-4 4H2z", "#b8a860", "#222", 1.4) + p("M4 14h12M4 18h12", "none", "#fff"),
  cut: p("M6 2l9 14M17 2L8 16", "none", "#9a9aa8", 2) + '<circle cx="6" cy="19" r="3" stroke="#9a9aa8" stroke-width="2"/><circle cx="17" cy="19" r="3" stroke="#9a9aa8" stroke-width="2"/>',
  copy: p("M3 3h10v14H3zM9 7h9l3 3v12H9z", "#d8d8e8", "#9a9aa8", 1.6) + p("M11 12h7M11 15h7M11 18h7", "none", "#9a9aa8"),
  paste: p("M3 4h14v14H3zM11 11h8l3 3v8H11z", "#d8d8e8", "#9a9aa8", 1.6) + p("M5 12q3-6 8-4", "none", "#9a9aa8"),
  undo: p("M2 7v10h9l-3-3q4-6 9-4 4 4-1 9 7-4 4-11-7-8-14 2z", "#40e080", "#0a5040", 1.3),
  redo: p("M22 7v10h-9l3-3q-4-6-9-4-4 4 1 9-7-4-4-11 7-8 14 2z", "#d8d8e6", "#9a9aa8", 1.3),
  help: p("M2 3v14l4-3 3 7 2-1-3-7h5z", "#ffffa0", N) + p("M14 7q1-5 6-3 4 4-2 7v4M18 18v3", "none", N, 3.5),
  fx: '<text x="1" y="18" fill="#111" font-family="Liberation Serif" font-style="italic" font-weight="bold" font-size="21">f<tspan font-size="14" dx="-1" dy="1">(x)</tspan></text>',
  note: '<ellipse cx="12" cy="9" rx="10" ry="7" fill="#fff" stroke="#111" stroke-width="1.500"/>' + p("M8 15l-5 7 10-6", "#fff", "#111") + p("M6 7h12M6 10h12M8 13h6", "none", "#111"),
  lamp: '<circle cx="12" cy="7" r="4" stroke="#9a9aa8" stroke-width="2"/><circle cx="12" cy="19" r="3" stroke="#9a9aa8" stroke-width="2"/>' + p("M12 11v4", "none", "#9a9aa8", 2),
  table: p("M3 2h19v20H3z", "#fff", N) + p("M3 2h19v5H3z", "#0020e0") + p("M3 10h19M3 14h19M3 18h19M7 7v15M12 7v15M17 7v15", "none", "#111", 1.3),
  rel: p("M2 9h5v7H2z", "#ffe860", "#111") + p("M8 12h9M8 10l7-7M8 14l7 6", "none", "#111") + p("M17 1h5v5h-5zM17 10h5v5h-5zM17 18h5v5h-5z", "#fff", "#00f", 1.5),
  lock: p("M7 11V6q5-7 9 0v5", "none", "#444", 2.5) + p("M4 10l14-2 2 11-9 4-7-5z", "#777", "#111", 1.5) + p("M11 12v5", "none", "#000", 3),
  know: p("M2 2h8v8H2zM2 14h8v8H2z", "#078", "#553") + p("M4 4h4v4H4zM4 16h4v4H4z", "#80f0e0") + p("M12 2q3 0 2 7l3 3-3 3q1 6-2 7M18 11h5M18 14h5", "none", "#444", 1.2),
  plane: p("M4 2l4 4 1 5 6-1 5-3 1 2-5 4 1 3 5 4-1 2-6-2-4-1-5 3-5 1 3-4 2-3-4-3 2-2z", C, "#113060", 1.3),
  fit: p("M2 2h20v20H2z", "#ffffa0", "#009a9a", 2) + p("M12 10V4m-2 2l2-2 2 2M12 14v6m-2-2l2 2 2-2M10 12H4m2-2l-2 2 2 2M14 12h6m-2-2l2 2-2 2M5 5l3 3M19 5l-3 3M5 19l3-3M19 19l-3-3", "none", "#111", 1.4),
  pan: p("M12 1l4 4h-3v6h6V8l4 4-4 4v-3h-6v6h3l-4 4-4-4h3v-6H5v3l-4-4 4-4v3h6V5H8z", "#2890c8", N),
  rotate: p("M2 9q3-6 9-6l8 2 4 7-3 6-3-7-8-1-4 2 6 2-1 3-7-2z", "#ffd4c0", "#743", 1.3) + p("M11 16l7-3 3 3-2 6h-5z", "#50b0f0", "#246"),
  zin: glass("M6 8h6M9 5v6"), zout: glass("M6 8h6"), mag: glass("", "#c8fcff"),
  normal: p("M2 21l6-8h14l-6 8z", "#20a0a0", "#055") + p("M12 17V3", "none", "#880", 1.5) + p("M8 7l4-5 4 5z", "#ff0", N),
  multi: p("M3 3h18v18H3z", C, "#0020c0", 2) + p("M12 3v18M3 12h18", "none", "#0020c0", 1.5) + p("M13 4h7v7h-7z", "#c060d0"),
  cube: p("M2 8l6-6h14v14l-6 6H2z", C, "#00f", 1.5) + p("M2 8h14v14M16 8l6-6", "none", "#00f", 1.5),
  cyl: p("M5 5v15q7 5 14 0V5z", "#ff0", "#111", 1.5) + p("M8 8v14h5V8z", "#2040d0") + '<ellipse cx="12" cy="5" rx="7" ry="3.500" fill="#ff6" stroke="#111" stroke-width="1.500"/>',
  hide: p("M3 2h18v20H3z", "#a0f4f4", N, 1.5) + p("M8 8l4-5h6v3l-4 6H8zM6 17l4-5h6v3l-4 6H6z", "#fff2b0", "#222"),
  swap: p("M3 2h18v20H3z", C, N, 1.5) + p("M6 15l4-4h6v4l-4 5H6z", "#fff2d0", "#222"),
  ruler: p("M6 1v22M9 1v22M1 13h22M1 17h22M6 4h3M6 8h3M13 13v3M17 13v3", "none", "#222", 1.5) + p("M15 2v8M13.500 3h3M13.500 9h3M14 20.500h8M14 19v3M22 19v3", "none", "#b00", 1.3),
  cam: p("M1 6h5l2-3h7l2 3h6v14H1z", "#222", "#000") + p("M2 7h20v3H2z", "#999") + '<circle cx="12" cy="13" r="5" fill="#fff" stroke="#000" stroke-width="2"/><circle cx="12" cy="13" r="2" fill="#111"/>',
  target: p("M1 1h22v22H1z", "#b8ecf8") + '<circle cx="12" cy="12" r="9" fill="#ffffa0" stroke="#2870c0" stroke-width="2"/><circle cx="12" cy="12" r="5" fill="#2ad" stroke="#234"/><circle cx="12" cy="12" r="2" fill="#f44"/>' + p("M12 1v22M1 12h22", "none", "#0040d0"),
  first: p("M3 3v18M13 4l-8 8 8 8M21 4l-8 8 8 8", "none", "#1c1c50", 2), last: p("M21 3v18M11 4l8 8-8 8M3 4l8 8-8 8", "none", "#9a9aa8", 2),
  books: p("M3 4l6-3v21l-6-2zM11 2h7v20h-7z", "#e8f8f8", "#113", 1.3) + p("M4 6l4-2v15l-4-1zM13 4h3v16h-3z", "#18a0a0") + p("M2 11h10M18 8l5 4-5 8", "none", "#135", 1.4) + p("M12 12l8-2-3 6h-5z", "#e8d820", "#333"),
  ground: p("M1 1h22v22H1z", "#00a0a0") + p("M1 1h11v11L1 20z", N) + p("M12 1h11v16l-11-5z", "#ffffa0"),
  light: p("M3 1l4-1 4 6-4 3z", "#2040d0", N) + p("M9 9l12 9H8z", "#80f0ff") + p("M7 21h16", "none", "#f0f000", 3),
  measure: p("M2 5h20M6 1L2 5l4 4M18 1l4 4-4 4", "none", "#2030a0", 2) + p("M2 13h20v8H2z", "#ffd8c0", "#246", 1.2) + p("M5 13v4M9 13v4M13 13v4M17 13v4", "none", "#222"),
  caliper: p("M6 1h13v4h-1v14h1v4H8v-4h6V5H6z", "#666", "#111", 1.4) + '<circle cx="8" cy="10" r="5" fill="#38b8e0" stroke="#222"/>' + p("M8 7l2 3-3 3", "none", "#ff0", 2)
};
const groups = [[6, ["neu", 28], ["open", 28], ["save", 28], ["print", 28], ["cut", 28], ["copy", 28], ["paste", 28], ["undo", 29, 1], ["redo", 30, 1], ["help", 30]],
  [309, ["fx", 30], ["note", 28], ["lamp", 23], ["table", 28, 1], ["rel", 30], ["lock", 28, 1], ["know", 30]],
  [523, ["plane", 28], ["fit", 28], ["pan", 28], ["rotate", 28], ["zin", 28], ["zout", 28], ["normal", 28], ["multi", 28], ["cube", 28, 1], ["cyl", 31, 1], ["hide", 30], ["swap", 28]],
  [881, ["ruler", 28]], [929, ["cam", 28]], [976, ["target", 28], ["first", 28], ["last", 28], ["mag", 28], ["books", 28], ["ground", 28], ["light", 28]], [1190, ["measure", 28], ["caliper", 28]]];
let x = 0;
document.getElementById("tools").innerHTML = groups.map(([start, ...list], gi) => {
  const after = gi ? 5 : 7;
  let out = `<i class="vsep" style="margin-left:${start - x}px;margin-right:${after}px"></i>`;
  x = start + 3 + after;
  list.forEach(([n, w, d]) => { out += `<span class="tool${d ? " drop" : ""}" style="width:${w}px">${svg(I[n])}</span>`; x += w; });
  return out;
}).join("");

const block = (c, ox, oy) => p(`M${ox} ${oy + 4}l3-4h8l-2 6H${ox + 2}z`, c, "#222");
const R = {
  sim: '<ellipse cx="12" cy="13" rx="13" ry="9" transform="rotate(-30 12 13)" fill="#0a3c88"/>' + p("M9 8l6 5-6 6h5l7-6-7-5zM16 8h6l-3 4 3 4h-5", "none", "#a8c8f0", 1.3) + p("M0 2l4 3-4 3zM5 2l4 3-4 3zM10 2l4 3-4 3z", "#222") + '<circle cx="5" cy="20" r="4" fill="#9090d0"/>',
  sel: cursor, wheel: '<circle cx="7" cy="13" r="5" fill="#fff" stroke="#333" stroke-width="1.500"/><circle cx="7" cy="13" r="6.500" stroke="#333" stroke-width="2" stroke-dasharray="2 1.500"/>' + p("M4 13h6M7 10v6", "none", "#333") + p("M12 2v15l4-3 3 6 2-1-2-6h4z", "#ffffa0", N),
  track, edit: film + p("M4 12l9-9h10v5l-8 7H8z", "#fff59a", "#222") + p("M13 14l8-10h2v4l-8 7z", "#ff0") + p("M0 2l10 10M10 7v5H5", "none", "#000", 1.7),
  color: film + block("#20e050", 4, 1) + block("#f01020", 11, 8), seq: sequence,
  therm: film + p("M1 13V5l3-3 2 7 3-7 3 6 3-6v8M20 12l1-8 2 6", "none", "#0a8c20", 2) + p("M14 1h5v13h-5z", "#fff", "#222") + p("M16.500 4v6", "none", "#00f", 3) + '<circle cx="16.500" cy="18" r="5" fill="#f01020" stroke="#fff"/>' + p("M16.500 10v6", "none", "#f00", 2.5),
  film: p("M4 4h6v6H4zM13 3l5 4-5 4zM18 3l4 4-4 4zM22 3h2v8h-2z", "#ff7010") + p("M1 14h23v10H1z", "#ff7010") + p("M1 16h23M1 22h23M8 14v10M16 14v10", "none", "#ffc080", 1.2),
  hand: p("M2 13L12 2l7 1 3 7-12 12-8-1z", "#f0a030", "#222", 1.4) + p("M2 13l4 1v8l-4-1z", "#078", "#222") + p("M7 13v8", "none", "#c01010", 2) + p("M6 12L13 5M11 6q4-5 8-1", "none", "#ff4", 3),
  explode: p("M1 1l22 22M23 1L1 23M1 6V1h5M18 1h5v5M23 18v5h-5M6 23H1v-5", "none", "#222", 1.2) + '<circle cx="12" cy="12" r="8" fill="#ffffa0"/>' + p("M7 7h4v4H7zM13 7h4v4h-4zM7 13h4v4H7zM13 13h4v4h-4z", "#ffd8c0", "#222", 1.3),
  grab: p("M1 8q5-10 14-4l4 4-2 4-6-4-5 1-3 4z", "#ffe4d0", "#222") + p("M1 18l4-4h7v3l-3 4H1z", "#189090", "#222", 1.3) + p("M11 8l6-1v6h-7z", "#fff", "#00f") + p("M15 15h8v6l-4 2-4-2z", "#f0e020", "#113", 1.4) + p("M19 15v8", "none", "#113", 1.4),
  sync: p("M3 10V4h8M6 7l-3 3-3-3M21 14v6h-8M18 17l3-3 3 3", "none", "#098838", 2.4) + p("M12 2h10l2 3-2 5H12zM2 14h10v9H2l-2-4z", "#78b8f8", N, 1.3) + '<circle cx="15" cy="6" r="3" fill="#fff" stroke="#00f" stroke-width="1.300"/><circle cx="8" cy="18" r="3" fill="#fff" stroke="#d00" stroke-width="1.300"/>',
  path: p("M0 3h12q3 0 3 3t-3 3H7v10q3 5 9 2l2-13", "none", "#b01818", 4) + p("M0 3h12q3 0 3 3t-3 3H7v10q3 5 9 2l2-13", "none", "#ffe030", 1.500) + p("M18 9l5-8M20 2l3-1v4", "none", "#b01818", 1.200),
  pull: p("M4 1l5 2v5l-4 2 4 4q1 6-6 8", "none", "#e8c000", 2.500) + p("M1 3h6M4 1v4M9 11h7l6-8M16 11l6 10M1 21h5", "none", "#1010e0", 1.700) + p("M14 8v7M19 5l4-3M19 18l4 4", "none", "#c00", 1.300),
  clash: '<circle cx="8" cy="9" r="7" fill="#a0d4f0" stroke="#222" stroke-width="1.300"/>' + p("M6 17l12-1 5 2-3 5-8 1z", "#40d0e0", "#222") + p("M15 1l2 5 5-2-2 5 3 4-5 0-2 5-2-4-6 2 3-5-2-4 5 0z", "#ffe020", "#c01000"),
  swapcol: p("M1 3l5-2 6 1v8l-5 2-6-2z", "#e01020", "#222") + p("M7 4l5-2v8l-5 2z", "#18b030", "#222") + p("M10 23q0-11 13-11v11z", "#109030", "#222") + p("M12 20q1-6 8-7l2 1-9 8z", "#f02020") + p("M16 6V3h3M22 5v4h-3", "none", "#226", 1.500),
  blue: p("M1 6l5-4h10v15l-4 4H1z", "#20a8e8", "#0838a0", 1.4) + p("M1 6h11v15M12 6l4-4", "none", "#0838a0") + '<circle cx="17" cy="17" r="6.500" fill="#444" stroke="#111"/><circle cx="17" cy="16" r="2.500" fill="#aaa"/>'
};
const side = [[4, 7], ["sim"], [9, 6], ["sel", 28, 1], [10, 5], ["wheel", 28, 1], [11, 6], ["track"], ["edit"], ["color", 28, 1], ["seq", 29], ["therm"], ["film", 31], ["hand", 25], ["explode"], ["grab"], ["sync"], [8, 7], ["path"], ["pull"], ["clash"], ["swapcol"], ["blue", 28, 1]];
document.getElementById("rightbar").innerHTML = side.map(([n, h = 28, d]) => typeof n === "number" ? `<i class="hsep" style="margin-top:${n}px;margin-bottom:${h}px"></i>` : `<span class="tool${d ? " drop" : ""}" style="height:${h}px">${svg(R[n])}</span>`).join("");

const tri = "#1c1450";
document.getElementById("pbuttons").innerHTML = [
  "M3 5h2v10H3zM11 5v10l-6-5zM17 5v10l-6-5z", "M6 5h2v10H6zM14 5v10l-6-5z", "M13 5v10l-6-5z", "M5 5h9v9H5z", "M8 5v10l6-5z", "M12 5h2v10h-2zM6 5v10l6-5z", "M15 5h2v10h-2zM3 5v10l6-5zM9 5v10l6-5z"
].map(d => svg(p(d, tri), "", 20)).join("") + svg(p("M5 3h8l1 2h4v14H5z", "#60e8ff", "#0020e0", 1.5) + p("M8 9h3M13 9h3M8 13h3M13 13h3M8 17h3M13 17h3", "none", "#222", 2) + p("M8 8.500h2M13 8.500h2M8 12.500h2M13 12.500h2M8 16.500h2M13 16.500h2", "none", "#ffe860", 1) + p("M5 0l1.500 4 4 1.500-4 1.500L5 11 3.500 7-.5 5.500 3.500 4z", "#ff0", "#900"), "", 20);
```
